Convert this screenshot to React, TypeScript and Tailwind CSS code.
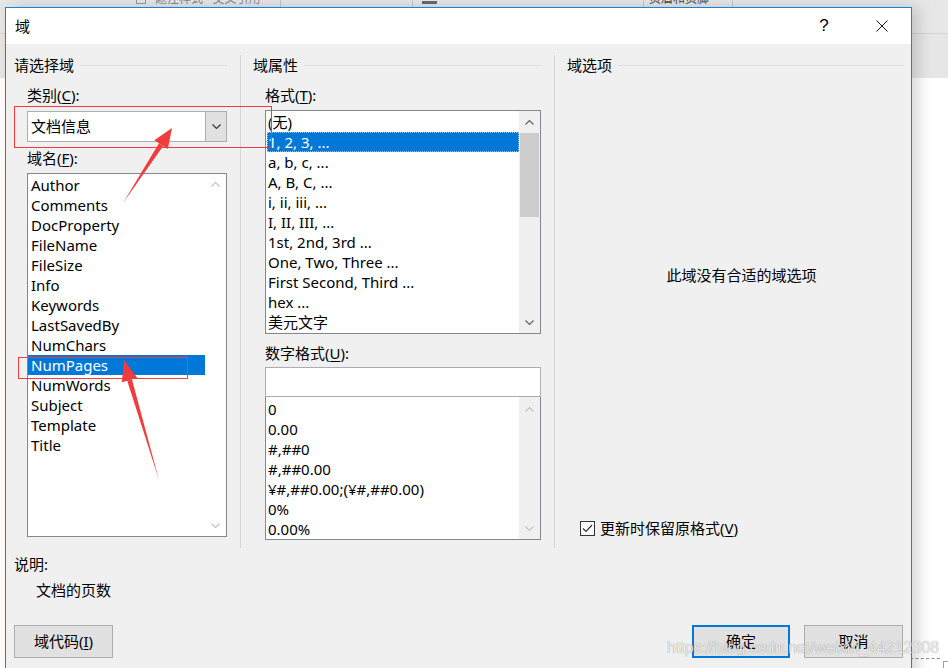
import React from "react";

const U = ({ children }: { children: React.ReactNode }) => (
  <span className="underline underline-offset-[2px] decoration-1">{children}</span>
);

function Chev({ up = false, color = "#606060" }: { up?: boolean; color?: string }) {
  return (
    <svg width="9" height="5" viewBox="0 0 9 5" fill="none">
      <path d={up ? "M0.5 4.5L4.5 0.5L8.5 4.5" : "M0.5 0.5L4.5 4.5L8.5 0.5"} stroke={color} strokeWidth="1.1" />
    </svg>
  );
}

function GroupHeader({ title }: { title: string }) {
  return (
    <div className="flex items-center h-[20px] gap-[6px]">
      <span className="whitespace-nowrap leading-[20px]">{title}</span>
      <div className="flex-1 h-px bg-[#dcdcdc]" />
    </div>
  );
}

const fieldNames = [
  "Author",
  "Comments",
  "DocProperty",
  "FileName",
  "FileSize",
  "Info",
  "Keywords",
  "LastSavedBy",
  "NumChars",
  "NumPages",
  "NumWords",
  "Subject",
  "Template",
  "Title",
];

const formats = [
  "(无)",
  "1, 2, 3, ...",
  "a, b, c, ...",
  "A, B, C, ...",
  "i, ii, iii, ...",
  "I, II, III, ...",
  "1st, 2nd, 3rd ...",
  "One, Two, Three ...",
  "First Second, Third ...",
  "hex ...",
  "美元文字",
];

const numFormats = ["0", "0.00", "#,##0", "#,##0.00", "¥#,##0.00;(¥#,##0.00)", "0%", "0.00%"];

export default function App() {
  return (
    <div className="relative w-[948px] h-[668px] overflow-hidden bg-white text-black text-[15px] font-['Noto_Sans','Noto_Sans_CJK_SC',sans-serif]">
      {/* background application window */}
      <div className="flex flex-col h-full">
        <div className="h-[34px] bg-[#e7e7e7] border-b border-[#d4d4d4]">
          <div className="flex h-[7px] overflow-hidden items-start text-[12px] text-[#8a8a8a]">
            <div className="w-[136px]" />
            <div className="w-[10px] h-[4px] border border-t-0 border-[#9a9a9a]" />
            <div className="w-[9px]" />
            <span className="w-[125px] leading-[12px] -mt-[7px] whitespace-nowrap">题注样式 · 交叉引用</span>
            <div className="w-px h-full bg-[#c6c6c6]" />
            <div className="w-[131px]" />
            <div className="w-px h-full bg-[#c6c6c6]" />
            <div className="w-[9px]" />
            <div className="w-[15px] h-[3px] mt-[1px] bg-[#6a6a6a]" />
            <div className="w-[206px]" />
            <div className="w-px h-full bg-[#c6c6c6]" />
            <span className="w-[88px] pl-[5px] leading-[12px] -mt-[7px] whitespace-nowrap text-[#444]">页眉和页脚</span>
            <div className="w-px h-full bg-[#c6c6c6]" />
          </div>
        </div>
        <div className="h-[44px] bg-[#e6e6e6]" />
        <div className="flex-1 bg-white flex justify-end items-end">
          <div className="w-[30px] h-[10px] border-t border-dashed border-[#8a8a8a] mr-[3px]" />
          <div className="w-[5px] h-[7px] border-l border-t border-[#a0a0a0]" />
        </div>
      </div>

      {/* dialog window */}
      <div className="absolute left-[5px] top-[7px] w-[907px] h-[670px] bg-[#f0f0f0] border border-b-0 border-[#1883d7] shadow-[6px_0_14px_rgba(0,0,0,0.16)] flex flex-col">
        {/* title bar */}
        <div className="h-[36px] bg-white flex items-center">
          <span className="pl-[9px] leading-[20px]">域</span>
          <div className="flex-1" />
          <div className="w-[56px] flex justify-center pr-[2px] text-[17px] leading-[20px] font-['Liberation_Sans',sans-serif]">?</div>
          <div className="w-[58px] flex justify-center">
            <svg width="12" height="12" viewBox="0 0 12 12">
              <path d="M0.5 0.5L11.5 11.5M11.5 0.5L0.5 11.5" stroke="#111" strokeWidth="1" />
            </svg>
          </div>
        </div>

        {/* body */}
        <div className="pt-[11px] flex flex-col">
          <div className="flex h-[493px]">
            {/* column 1 */}
            <div className="w-[234px] pl-[8px] pr-[13px]">
              <GroupHeader title="请选择域" />
              <div className="pl-[13px]">
                <div className="mt-[10px] h-[20px] leading-[20px]">
                  类别(<U>C</U>):
                </div>
                <div className="mt-[6px] w-[200px] h-[31px] border border-[#adadad] bg-white flex">
                  <div className="flex-1 pl-[3px] leading-[29px]">文档信息</div>
                  <div className="w-[21px] bg-[#e1e1e1] border-l border-[#adadad] flex items-center justify-center">
                    <Chev color="#333" />
                  </div>
                </div>
                <div className="mt-[6px] h-[20px] leading-[20px]">
                  域名(<U>F</U>):
                </div>
                <div className="mt-[5px] w-[200px] h-[364px] border border-[#828790] bg-white flex">
                  <div className="flex-1 pt-px">
                    {fieldNames.map((n) => (
                      <div
                        key={n}
                        className={
                          n === "NumPages"
                            ? "h-[20px] leading-[20px] pl-[3px] bg-[#0078d7] text-white"
                            : "h-[20px] leading-[20px] pl-[3px]"
                        }
                      >
                        {n}
                      </div>
                    ))}
                  </div>
                  <div className="w-[21px] flex flex-col justify-between">
                    <div className="h-[21px] flex items-center justify-center">
                      <Chev up color="#c2c2c2" />
                    </div>
                    <div className="h-[21px] flex items-center justify-center">
                      <Chev color="#c2c2c2" />
                    </div>
                  </div>
                </div>
              </div>
            </div>

            {/* column 2 */}
            <div className="w-[314px] border-l border-[#d5d5d5] pl-[12px] pr-[13px]">
              <GroupHeader title="域属性" />
              <div className="pl-[12px]">
                <div className="mt-[10px] h-[20px] leading-[20px]">
                  格式(<U>T</U>):
                </div>
                <div className="mt-[5px] h-[224px] border border-[#828790] bg-white flex">
                  <div className="flex-1 pt-px pl-px">
                    {formats.map((f, i) => (
                      <div
                        key={f}
                        className={
                          i === 1
                            ? "h-[20px] leading-[20px] pl-[1px] bg-[#0078d7] text-white outline-1 outline-dotted outline-[#8cc4f0] -outline-offset-1"
                            : "h-[20px] leading-[20px] pl-[1px]"
                        }
                      >
                        {f}
                      </div>
                    ))}
                  </div>
                  <div className="w-[21px] bg-[#f0f0f0] flex flex-col">
                    <div className="h-[22px] flex items-center justify-center">
                      <Chev up color="#606060" />
                    </div>
                    <div className="h-[84px] mx-[1px] bg-[#cdcdcd]" />
                    <div className="flex-1" />
                    <div className="h-[22px] flex items-center justify-center">
                      <Chev color="#606060" />
                    </div>
                  </div>
                </div>
                <div className="mt-[9px] h-[20px] leading-[20px]">
                  数字格式(<U>U</U>):
                </div>
                <div className="mt-[4px] h-[30px] border border-[#abadb3] bg-white" />
                <div className="h-[143px] border border-t-0 border-[#828790] bg-white flex">
                  <div className="flex-1 pt-[2px] pl-px">
                    {numFormats.map((f) => (
                      <div key={f} className="h-[20px] leading-[20px] pl-[1px] whitespace-nowrap">
                        {f}
                      </div>
                    ))}
                  </div>
                  <div className="w-[21px] bg-[#f0f0f0] flex flex-col justify-between pt-[2px]">
                    <div className="h-[20px] flex items-center justify-center">
                      <Chev up color="#c2c2c2" />
                    </div>
                    <div className="h-[22px] flex items-center justify-center">
                      <Chev color="#c2c2c2" />
                    </div>
                  </div>
                </div>
              </div>
            </div>

            {/* column 3 */}
            <div className="flex-1 border-l border-[#d5d5d5] pl-[12px] pr-[7px]">
              <GroupHeader title="域选项" />
              <div className="mt-[190px] h-[20px] leading-[20px] text-center pl-[12px]">此域没有合适的域选项</div>
              <div className="mt-[233px] h-[20px] pl-[13px] flex items-center gap-[5px]">
                <div className="w-[15px] h-[15px] border border-[#333] bg-white flex items-center justify-center">
                  <svg width="11" height="9" viewBox="0 0 11 9">
                    <path d="M1 4.5L4 7.5L10 1" stroke="#333" strokeWidth="1.2" fill="none" />
                  </svg>
                </div>
                <span className="leading-[20px]">
                  更新时保留原格式(<U>V</U>)
                </span>
              </div>
            </div>
          </div>

          {/* bottom */}
          <div className="mt-[6px] pl-[8px] h-[20px] leading-[20px]">说明:</div>
          <div className="mt-[6px] pl-[30px] h-[20px] leading-[20px]">文档的页数</div>
          <div className="mt-[25px] px-[8px] flex items-center">
            <div className="w-[99px] h-[33px] bg-[#e1e1e1] border border-[#adadad] flex items-center justify-center">
              域代码(<U>I</U>)
            </div>
            <div className="flex-1" />
            <div className="w-[98px] h-[33px] bg-[#e1e1e1] border-2 border-[#0078d7] flex items-center justify-center">
              确定
            </div>
            <div className="w-[14px]" />
            <div className="w-[99px] h-[33px] bg-[#e1e1e1] border border-[#adadad] flex items-center justify-center">
              取消
            </div>
          </div>
        </div>
      </div>

      {/* annotation overlays */}
      <div className="absolute left-[14px] top-[106px] w-[258px] h-[42px] border border-[#f03c3c]" />
      <div className="absolute left-[18px] top-[357px] w-[170px] h-[22px] border border-[#f03c3c]" />
      <svg className="absolute left-0 top-0" width="948" height="668" viewBox="0 0 948 668">
        <polygon points="123,203 163.2,146.1 159,143.3" fill="#f03c3c" />
        <polygon points="172,128 167.8,149.1 154.4,140.3" fill="#f03c3c" />
        <polygon points="159,480 131.9,379.3 127.2,380.7" fill="#f03c3c" />
        <polygon points="124,360 137.3,377.9 121.9,382.3" fill="#f03c3c" />
      </svg>

      {/* watermark */}
      <div className="absolute left-[667px] top-[638px] text-[16px] leading-[20px] whitespace-nowrap font-['Liberation_Sans',sans-serif] text-[rgba(255,255,255,0.8)] [text-shadow:0_0_1px_rgba(0,0,0,0.45)]">
        https://blog.csdn.net/weixin_44212308
      </div>
    </div>
  );
}
